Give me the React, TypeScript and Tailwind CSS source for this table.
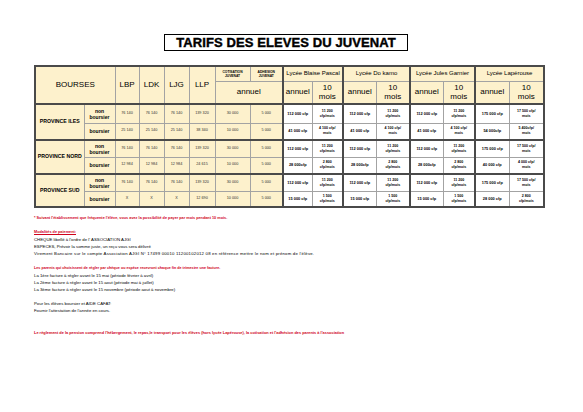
import React from "react";

type LyCell = [string, string[]];

const groups: { name: string; rows: { sub: string[]; base: string[]; ly: LyCell[] }[] }[] = [
  {
    name: "PROVINCE ILES",
    rows: [
      {
        sub: ["non", "boursier"],
        base: ["76 140", "76 140", "76 140", "139 320", "30 000", "5 000"],
        ly: [
          ["112 000 cfp", ["11 200", "cfp/mois"]],
          ["112 000 cfp", ["11 200", "cfp/mois"]],
          ["112 000 cfp", ["11 200", "cfp/mois"]],
          ["175 000 cfp", ["17 500 cfp/", "mois"]],
        ],
      },
      {
        sub: ["boursier"],
        base: ["25 140", "25 140", "25 140", "38 340", "10 000", "5 000"],
        ly: [
          ["41 000 cfp", ["4 100 cfp/", "mois"]],
          ["41 000 cfp", ["4 100 cfp/", "mois"]],
          ["41 000 cfp", ["4 100 cfp/", "mois"]],
          ["54 000cfp", ["5 400cfp/", "mois"]],
        ],
      },
    ],
  },
  {
    name: "PROVINCE NORD",
    rows: [
      {
        sub: ["non", "boursier"],
        base: ["76 140", "76 140", "76 140", "139 320", "30 000", "5 000"],
        ly: [
          ["112 000 cfp", ["11 200", "cfp/mois"]],
          ["112 000 cfp", ["11 200", "cfp/mois"]],
          ["112 000 cfp", ["11 200", "cfp/mois"]],
          ["175 000 cfp", ["17 500 cfp/", "mois"]],
        ],
      },
      {
        sub: ["boursier"],
        base: ["12 984", "12 984", "12 984", "24 615", "10 000", "5 000"],
        ly: [
          ["28 000cfp", ["2 800", "cfp/mois"]],
          ["28 000cfp", ["2 800", "cfp/mois"]],
          ["28 000cfp", ["2 800", "cfp/mois"]],
          ["40 000 cfp", ["4 000 cfp/", "mois"]],
        ],
      },
    ],
  },
  {
    name: "PROVINCE SUD",
    rows: [
      {
        sub: ["non", "boursier"],
        base: ["76 140", "76 140", "76 140", "139 320", "30 000", "5 000"],
        ly: [
          ["112 000 cfp", ["11 200", "cfp/mois"]],
          ["112 000 cfp", ["11 200", "cfp/mois"]],
          ["112 000 cfp", ["11 200", "cfp/mois"]],
          ["175 000 cfp", ["17 500 cfp/", "mois"]],
        ],
      },
      {
        sub: ["boursier"],
        base: ["X", "X", "X", "12 690", "10 000", "5 000"],
        ly: [
          ["15 000 cfp", ["1 500", "cfp/mois"]],
          ["15 000 cfp", ["1 500", "cfp/mois"]],
          ["15 000 cfp", ["1 500", "cfp/mois"]],
          ["28 000 cfp", ["2 800", "cfp/mois"]],
        ],
      },
    ],
  },
];

const lycees = ["Lycée Blaise Pascal", "Lycée Do kamo", "Lycée Jules Garnier", "Lycée Lapérouse"];
const widths = [49, 31, 24, 25, 25, 26, 35, 33, 29, 31, 33, 34, 33, 32, 34, 35];
const rowHeights = [19, 17, 17, 17, 17, 16];

const thin = "border border-[#a3a3a3]";
const cream = "bg-[#fdf1cc]";
const thickL = "border-l-2 border-l-[#4a4a4a]";

export default function App() {
  return (
    <div className="w-[583px] h-[412px] bg-white font-['Liberation_Sans',Arial,sans-serif] text-black">
      <div className="pt-[34px] pl-[34px]">
        {/* titre */}
        <div className="ml-[130px] w-[244px] h-[17px] border-[1.5px] border-black flex items-center justify-center">
          <span className="text-[13px] font-black leading-none tracking-[0.1px] [-webkit-text-stroke:0.4px_black]">
            TARIFS DES ELEVES DU JUVENAT
          </span>
        </div>

        <table className="mt-[14px] table-fixed border-collapse w-[509px] border-2 border-[#4a4a4a]">
          <colgroup>
            {widths.map((w, i) => (
              <col key={i} style={{ width: w }} />
            ))}
          </colgroup>
          <thead>
            <tr className="h-[15px]">
              <th rowSpan={2} colSpan={2} className={`${thin} ${cream} text-[8px] font-normal`}>
                BOURSES
              </th>
              {["LBP", "LDK", "LJG", "LLP"].map((l) => (
                <th key={l} rowSpan={2} className={`${thin} ${cream} text-[8px] font-normal`}>
                  {l}
                </th>
              ))}
              <th className={`${thin} ${cream} text-[3.3px] font-bold leading-[4px]`}>
                COTISATION
                <br />
                JUVENAT
              </th>
              <th className={`${thin} ${cream} text-[3.3px] font-bold leading-[4px]`}>
                ADHESION
                <br />
                JUVENAT
              </th>
              {lycees.map((l) => (
                <th key={l} colSpan={2} className={`${thin} ${thickL} ${cream} text-[6px] font-normal whitespace-nowrap`}>
                  {l}
                </th>
              ))}
            </tr>
            <tr className="h-[23px] border-b-2 border-b-[#4a4a4a]">
              <th colSpan={2} className={`${thin} ${cream} text-[8px] font-normal`}>
                annuel
              </th>
              {lycees.map((l) => (
                <React.Fragment key={l}>
                  <th className={`${thin} ${thickL} ${cream} text-[8px] font-normal`}>annuel</th>
                  <th className={`${thin} ${cream} text-[8px] font-normal leading-[9px]`}>
                    10
                    <br />
                    mois
                  </th>
                </React.Fragment>
              ))}
            </tr>
          </thead>
          <tbody>
            {groups.map((g, gi) =>
              g.rows.map((r, ri) => {
                const h = rowHeights[gi * 2 + ri];
                return (
                  <tr
                    key={g.name + ri}
                    style={{ height: h }}
                    className={ri === 1 ? "border-b-2 border-b-[#4a4a4a]" : ""}
                  >
                    {ri === 0 && (
                      <td rowSpan={2} className={`${thin} ${cream} text-[5.2px] font-bold text-center whitespace-nowrap`}>
                        {g.name}
                      </td>
                    )}
                    <td className={`${thin} ${cream} text-[5px] font-bold text-center leading-[6px]`}>
                      {r.sub.map((s, k) => (
                        <div key={k}>{s}</div>
                      ))}
                    </td>
                    {r.base.map((v, k) => (
                      <td key={k} className={`${thin} ${cream} text-[3.8px] text-center text-[#333]`}>
                        {v}
                      </td>
                    ))}
                    {r.ly.map(([a, m], k) => (
                      <React.Fragment key={k}>
                        <td className={`${thin} ${thickL} bg-white text-[3.9px] font-bold text-center whitespace-nowrap`}>
                          {a}
                        </td>
                        <td className={`${thin} bg-white text-[3.6px] font-bold text-center leading-[5px]`}>
                          {m.map((s, j) => (
                            <div key={j}>{s}</div>
                          ))}
                        </td>
                      </React.Fragment>
                    ))}
                  </tr>
                );
              })
            )}
          </tbody>
        </table>

        {/* notes */}
        <div className="mt-[7px] flex flex-col leading-[7px] text-[4.3px]">
          <p className="font-bold text-[#d0021b] text-[3.8px]">
            * Suivant l'établissement que fréquente l'élève, vous avez la possibilité de payer par mois pendant 10 mois.
          </p>
          <p className="mt-[7px] font-bold text-[#d0021b] text-[3.8px] underline">Modalités de paiement:</p>
          <p>CHEQUE libellé à l'ordre de l' ASSOCIATION AJGI</p>
          <p>ESPECES, Prévoir la somme juste, un reçu vous sera délivré</p>
          <p className="tracking-[0.2px]">
            Virement Bancaire sur le compte Association AJGI N° 17499 00010 11200102012 08 en référence mettre le nom et
            prénom de l'élève.
          </p>
          <p className="mt-[8px] font-bold text-[#d0021b] text-[3.7px]">
            Les parents qui choisissent de régler par chèque ou espèce recevront chaque fin de trimestre une facture.
          </p>
          <p>La 1ère facture à régler avant le 15 mai (période février à avril)</p>
          <p>La 2ème facture à régler avant le 15 aout (période mai à juillet)</p>
          <p>La 3ème facture à régler avant le 15 novembre (période aout à novembre)</p>
          <p className="mt-[7px]">Pour les élèves boursier et AIDE CAFAT:</p>
          <p>Fournir l'attestation de l'année en cours.</p>
          <p className="mt-[15px] font-bold text-[#d0021b] text-[3.9px]">
            Le règlement de la pension comprend l'hébergement, le repas,le transport pour les élèves (hors lycée
            Lapérouse), la cotisation et l'adhésion des parents à l'association
          </p>
        </div>
      </div>
    </div>
  );
}
